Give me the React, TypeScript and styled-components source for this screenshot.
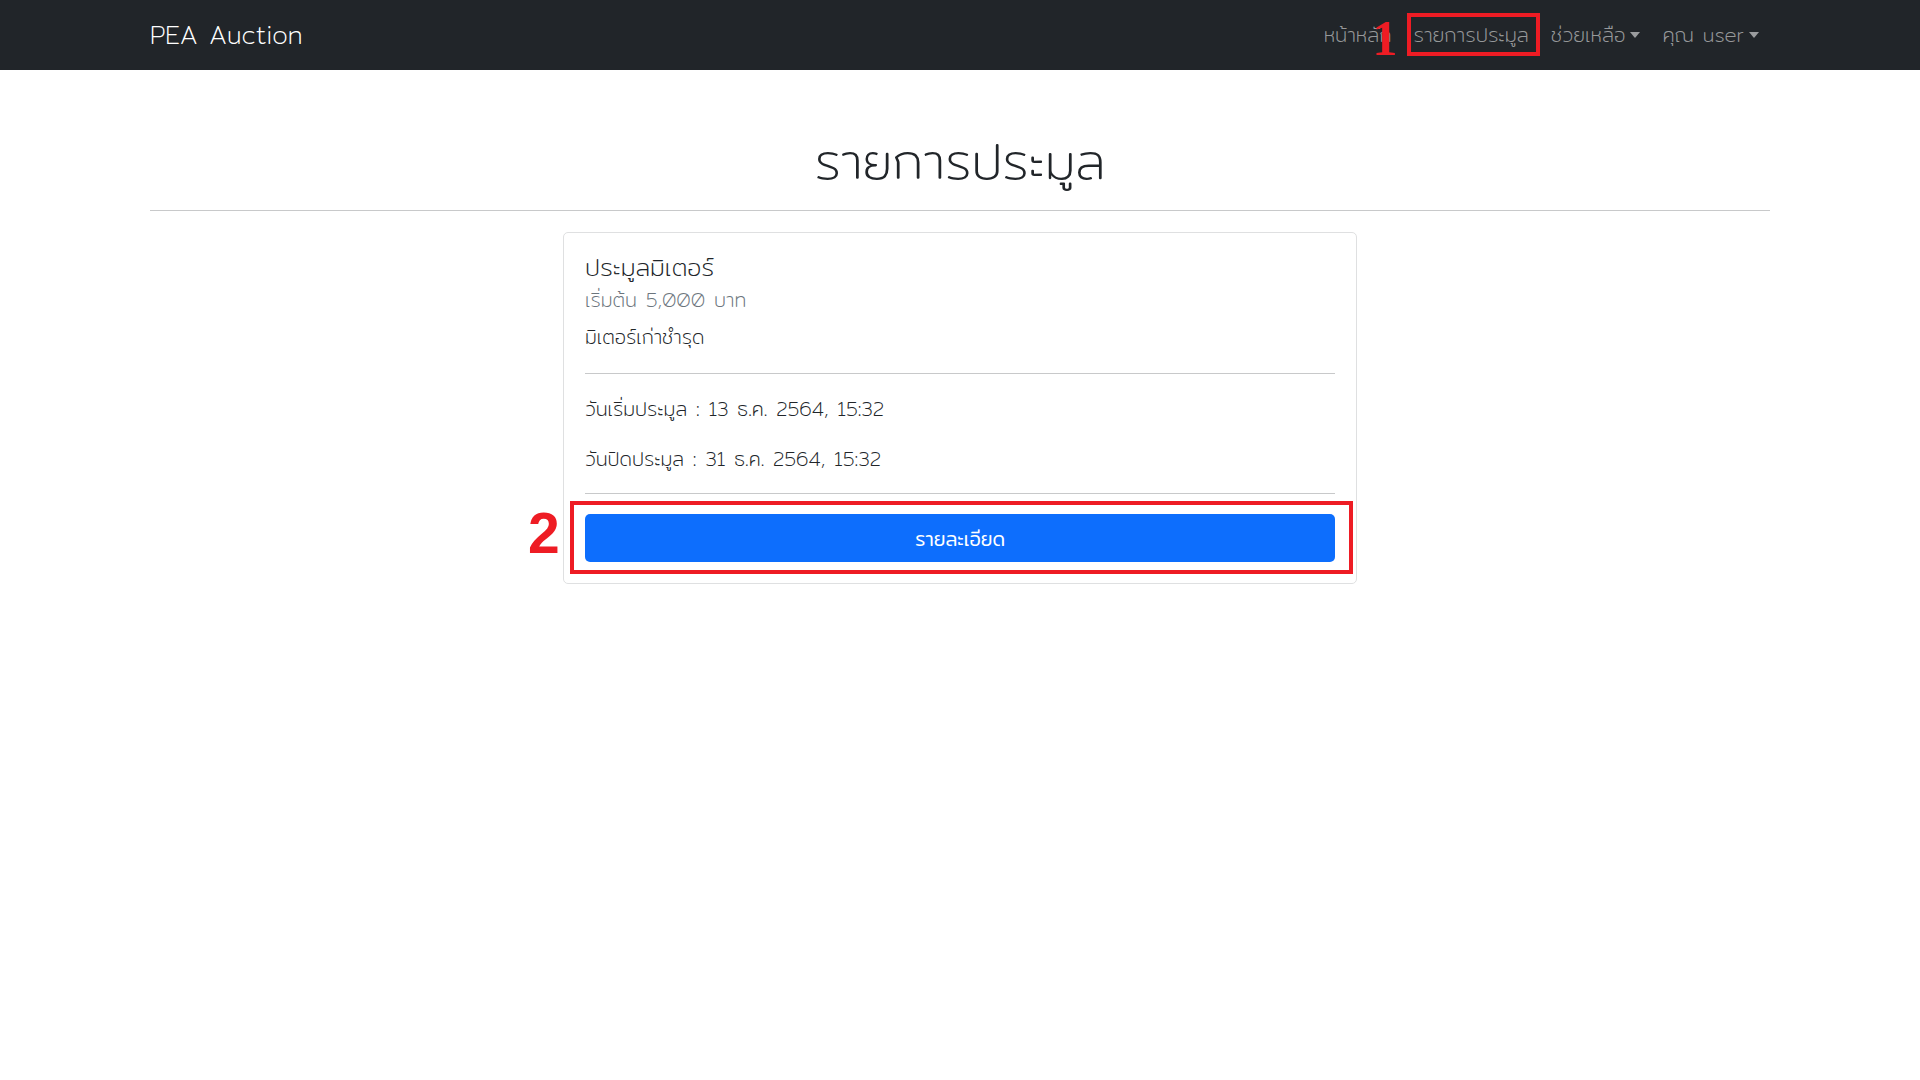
import React from "react";
import styled, { createGlobalStyle } from "styled-components";

const Global = createGlobalStyle`
  html, body { margin: 0; padding: 0; background: #fff; }
  body {
    font-family: "Mitr", "Prompt", "Noto Sans Thai", "Noto Sans", sans-serif;
    font-weight: 200;
    font-size: 19.6px;
    color: #212529;
  }
  * { box-sizing: border-box; }
`;

const NavBar = styled.nav`
  background: #212529;
  height: 70px;
`;

const Container = styled.div`
  width: 1620px;
  margin: 0 auto;
  height: 100%;
`;

const NavInner = styled(Container)`
  display: flex;
  align-items: center;
  justify-content: space-between;
`;

const Brand = styled.a`
  color: #fff;
  font-size: 25px;
  text-decoration: none;
`;

const NavList = styled.ul`
  list-style: none;
  display: flex;
  align-items: center;
  margin: 0;
  padding: 0;
`;

const NavItem = styled.li`
  position: relative;
`;

const NavLink = styled.a<{ $caret?: boolean }>`
  display: block;
  padding: 8px 11px;
  line-height: 30px;
  color: rgba(255, 255, 255, 0.55);
  font-size: 20px;
  text-decoration: none;
  &::after {
    content: ${(p) => (p.$caret ? '""' : "none")};
    display: inline-block;
    margin-left: 5px;
    vertical-align: 4px;
    border-top: 6px solid;
    border-right: 5px solid transparent;
    border-left: 5px solid transparent;
  }
`;

const Mark = styled.span`
  position: absolute;
  border: 4px solid #ee1c24;
  pointer-events: none;
`;

const MarkNumber = styled.span<{ $serif?: boolean }>`
  position: absolute;
  color: #ee1c24;
  font-weight: 700;
  font-family: ${(p) => (p.$serif ? '"Liberation Serif", serif' : '"Liberation Sans", sans-serif')};
  line-height: 1;
  pointer-events: none;
`;

const Main = styled(Container)``;

const Title = styled.h1`
  margin: 0;
  padding-top: 61px;
  text-align: center;
  font-size: 50.5px;
  font-weight: 200;
  line-height: 1.2;
`;

const Rule = styled.hr`
  border: 0;
  border-top: 1px solid #c8c9ca;
  margin: 18px 0 21px;
`;

const Card = styled.div`
  width: 794px;
  margin: 0 auto;
  border: 1px solid #dfe0e1;
  border-radius: 5px;
  padding: 20.5px 21px 21px;
`;

const CardTitle = styled.h5`
  margin: 0;
  font-size: 24.5px;
  font-weight: 200;
  line-height: 1.2;
`;

const CardSub = styled.h6`
  margin: 6px 0 0;
  font-size: 19.6px;
  font-weight: 200;
  line-height: 1.2;
  color: #6c757d;
`;

const CardText = styled.p<{ $first?: boolean }>`
  margin: ${(p) => (p.$first ? "10px 0 0" : "0")};
  line-height: 1.5;
  & + & { margin-top: 21px; }
`;

const CardRule = styled.hr<{ $top: number; $bottom: number }>`
  border: 0;
  border-top: 1px solid #c8c9ca;
  margin: ${(p) => `${p.$top}px 0 ${p.$bottom}px`};
`;

const ButtonWrap = styled.div`
  position: relative;
`;

const DetailButton = styled.button`
  display: block;
  width: 100%;
  height: 48px;
  border: 0;
  border-radius: 5px;
  background: #0d6efd;
  color: #fff;
  font-family: inherit;
  font-weight: 300;
  font-size: 19.6px;
`;

export default function App() {
  return (
    <>
      <Global />
      <NavBar>
        <NavInner>
          <Brand href="#">PEA Auction</Brand>
          <NavList>
            <NavItem>
              <NavLink href="#">หน้าหลัก</NavLink>
            </NavItem>
            <NavItem>
              <NavLink href="#">รายการประมูล</NavLink>
              <Mark style={{ left: 4, right: 0, top: 1, bottom: 2 }} />
              <MarkNumber $serif style={{ left: -30, top: 1, fontSize: 50 }}>1</MarkNumber>
            </NavItem>
            <NavItem>
              <NavLink href="#" $caret>ช่วยเหลือ</NavLink>
            </NavItem>
            <NavItem>
              <NavLink href="#" $caret>คุณ user</NavLink>
            </NavItem>
          </NavList>
        </NavInner>
      </NavBar>
      <Main>
        <Title>รายการประมูล</Title>
        <Rule />
        <Card>
          <CardTitle>ประมูลมิเตอร์</CardTitle>
          <CardSub>เริ่มต้น 5,000 บาท</CardSub>
          <CardText $first>มิเตอร์เก่าชำรุด</CardText>
          <CardRule $top={21.5} $bottom={20} />
          <CardText>วันเริ่มประมูล : 13 ธ.ค. 2564, 15:32</CardText>
          <CardText>วันปิดประมูล : 31 ธ.ค. 2564, 15:32</CardText>
          <CardRule $top={19.5} $bottom={20} />
          <ButtonWrap>
            <DetailButton>รายละเอียด</DetailButton>
            <Mark style={{ left: -15, right: -18, top: -13, bottom: -12 }} />
            <MarkNumber style={{ left: -57, top: -9, fontSize: 57 }}>2</MarkNumber>
          </ButtonWrap>
        </Card>
      </Main>
    </>
  );
}
